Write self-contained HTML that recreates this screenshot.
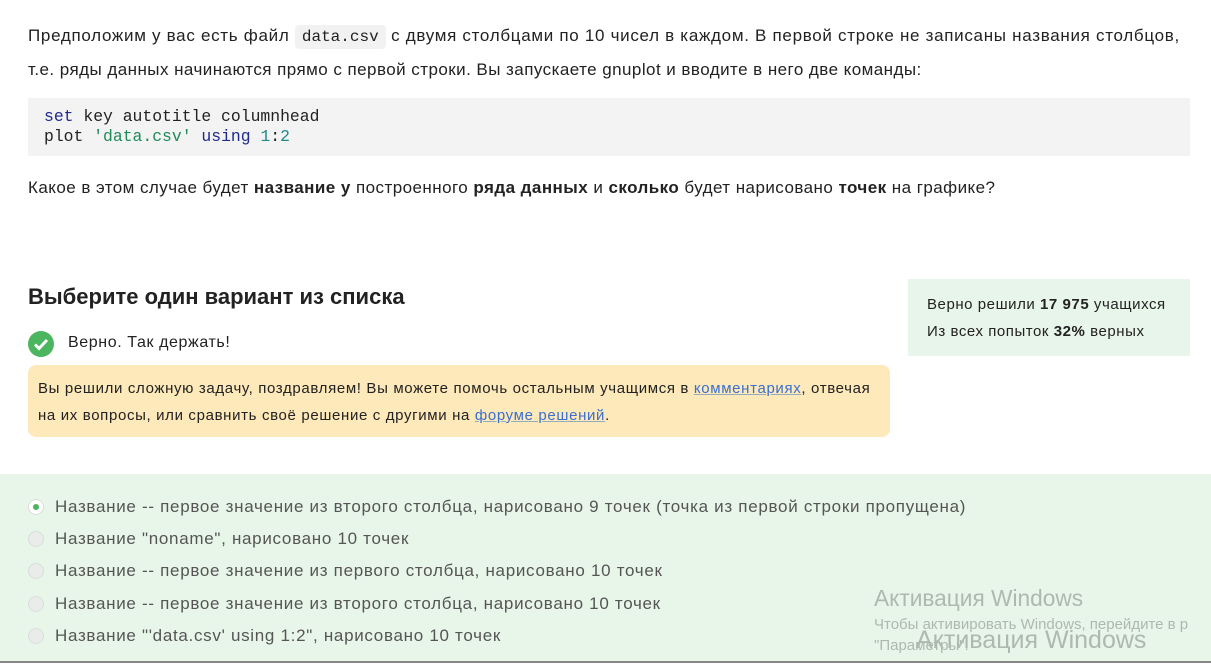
<!DOCTYPE html>
<html><head><meta charset="utf-8"><style>
body{margin:0;width:1211px;height:664px;overflow:hidden;background:#fff;font-family:"Liberation Sans",sans-serif;color:#222;position:relative}
.t{position:absolute;left:28px;font-size:17px;letter-spacing:0.45px;white-space:nowrap}
code{font-family:"Liberation Mono",monospace;background:#f2f2f2;padding:3px 7px;border-radius:4px;font-size:16px;letter-spacing:0}
.code{position:absolute;left:28px;top:98px;width:1162px;height:58px;background:#f3f3f3;font-family:"Liberation Mono",monospace;font-size:16.4px;line-height:20px;padding:9px 16px;box-sizing:border-box;color:#222}
.kw{color:#1f2a8a}.st{color:#1f8a5a}.nm{color:#1a8a8a}
h2{position:absolute;left:28px;top:284px;margin:0;font-size:22px;font-weight:bold;color:#222;letter-spacing:0}
.stat{position:absolute;left:908px;top:279px;width:282px;height:77px;background:#e8f5ea;font-size:15px;letter-spacing:0.55px;line-height:27px;padding:12px 19px;box-sizing:border-box;color:#222;white-space:nowrap}
.ok{position:absolute;left:28px;top:331px;font-size:16px;letter-spacing:0.6px}
.ok .c{position:absolute;left:0;top:0;width:26px;height:26px;border-radius:50%;background:#4bb560}
.ok span{position:absolute;left:40px;top:3px;white-space:nowrap}
.note{position:absolute;left:28px;top:365px;width:862px;height:72px;background:#fde9b9;border-radius:8px;font-size:15px;line-height:27px;padding:10px 10px;box-sizing:border-box;letter-spacing:0.65px;white-space:nowrap}
a{color:#3b6fd0;text-decoration:underline;text-decoration-color:#9ab}
.opts{position:absolute;left:0;top:474px;width:1211px;height:187px;background:#e8f6ea;border-bottom:2px solid #888}
.o{position:absolute;left:28px;font-size:17px;letter-spacing:0.7px;color:#555;white-space:nowrap}
.o i{position:absolute;left:0;top:2px;width:16px;height:16px;border-radius:50%;background:#e9ece9;border:1px solid #dcdcdc;box-sizing:border-box}
.o span{position:absolute;left:27px;top:0}
.w{position:absolute;color:#aeb8ae;white-space:nowrap}
</style></head><body>
<div class="t" style="top:26px;letter-spacing:0.7px">Предположим у вас есть файл <code>data.csv</code> с двумя столбцами по 10 чисел в каждом. В первой строке не записаны названия столбцов,</div>
<div class="t" style="top:60px">т.е. ряды данных начинаются прямо с первой строки. Вы запускаете gnuplot и вводите в него две команды:</div>
<div class="code"><span class="kw">set</span> key autotitle columnhead<br>plot <span class="st">'data.csv'</span> <span class="kw">using</span> <span class="nm">1</span>:<span class="nm">2</span></div>
<div class="t" style="top:178px">Какое в этом случае будет <b>название у</b> построенного <b>ряда данных</b> и <b>сколько</b> будет нарисовано <b>точек</b> на графике?</div>
<h2>Выберите один вариант из списка</h2>
<div class="stat">Верно решили <b>17 975</b> учащихся<br>Из всех попыток <b>32%</b> верных</div>
<div class="ok"><div class="c"><svg width="26" height="26"><path d="M7 13.5l4 4 8-8.5" stroke="#fff" stroke-width="3" fill="none"/></svg></div><span>Верно. Так держать!</span></div>
<div class="note">Вы решили сложную задачу, поздравляем! Вы можете помочь остальным учащимся в <a>комментариях</a>, отвечая<br>на их вопросы, или сравнить своё решение с другими на <a>форуме решений</a>.</div>
<div class="opts">
<div class="o" style="top:23px"><i style="background:#fff"><b style="position:absolute;left:4px;top:4px;width:6px;height:6px;border-radius:50%;background:#4bb560"></b></i><span>Название -- первое значение из второго столбца, нарисовано 9 точек (точка из первой строки пропущена)</span></div>
<div class="o" style="top:55px"><i></i><span>Название "noname", нарисовано 10 точек</span></div>
<div class="o" style="top:87px"><i></i><span>Название -- первое значение из первого столбца, нарисовано 10 точек</span></div>
<div class="o" style="top:120px"><i></i><span>Название -- первое значение из второго столбца, нарисовано 10 точек</span></div>
<div class="o" style="top:152px"><i></i><span>Название "'data.csv' using 1:2", нарисовано 10 точек</span></div>
<div class="w" style="left:874px;top:111px;font-size:22.7px">Активация Windows</div>
<div class="w" style="left:874px;top:142px;font-size:15px">Чтобы активировать Windows, перейдите в р</div>
<div class="w" style="left:874px;top:163px;font-size:15px">"Параметры".</div>
<div class="w" style="left:916px;top:152px;font-size:25px">Активация Windows</div>
</div>
</body></html>
